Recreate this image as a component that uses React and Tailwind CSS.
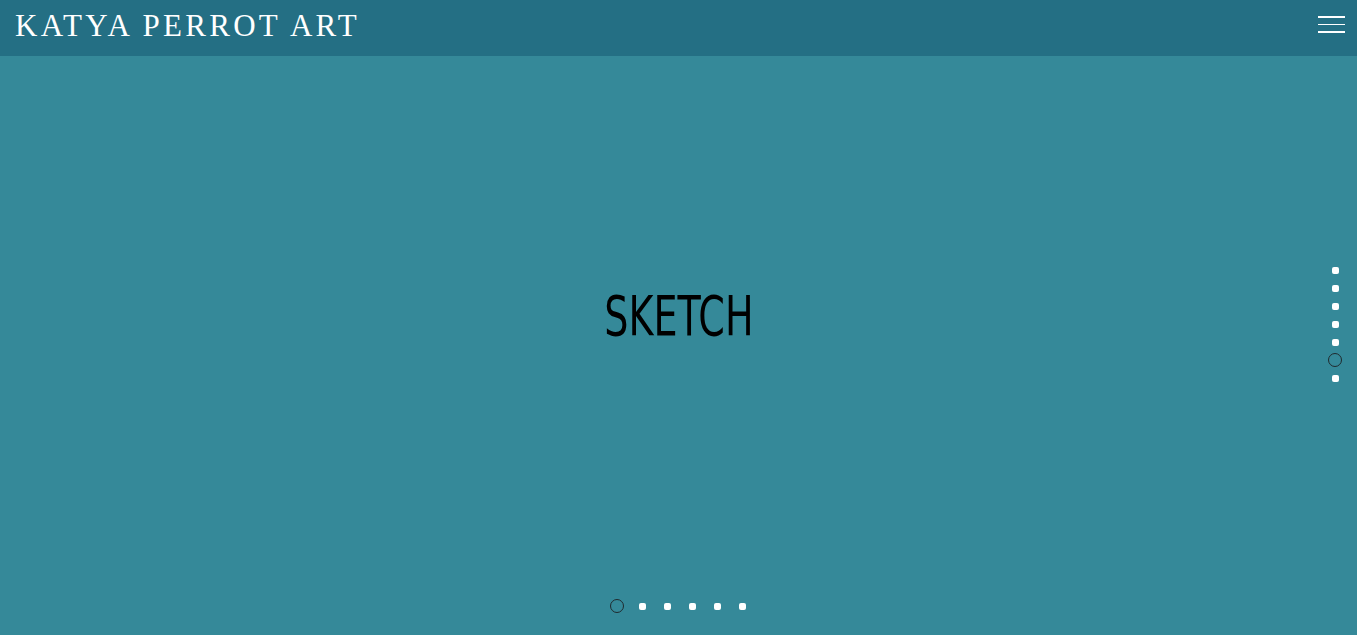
import React from 'react';

const sideDots = [0, 1, 2, 3, 4, 5, 6];
const bottomDots = [0, 1, 2, 3, 4, 5];

function Dot({ active }) {
    if (active) {
        return <span className="block w-[14px] h-[14px] rounded-full border border-[#1f2a2e]" />;
    }
    return <span className="block w-[7px] h-[7px] rounded-[2px] bg-white" />;
}

export default function App() {
    return (
        <div className="w-[1357px] h-[635px] flex flex-col bg-[#358999] overflow-hidden">
            {/* Top bar */}
            <header className="h-[56px] flex-shrink-0 bg-[#246f84] flex items-center justify-between pl-[15px] pr-[12px]">
                <h1
                    className="text-white text-[31px] leading-none tracking-[3.3px] pb-[6px]"
                    style={{ fontFamily: '"Liberation Serif", "DejaVu Serif", serif' }}
                >
                    KATYA PERROT ART
                </h1>
                <button className="flex flex-col gap-[6px] w-[27px] pb-[7px]">
                    <span className="block h-[2px] bg-white" />
                    <span className="block h-[1px] bg-white" />
                    <span className="block h-[2px] bg-white" />
                </button>
            </header>

            {/* Slide */}
            <main className="flex-1 relative flex flex-col">
                <div className="flex-1 flex items-center justify-center pb-[58px]">
                    <h2
                        className="text-black text-[55px] leading-none scale-x-[0.77]"
                        style={{ fontFamily: '"DejaVu Sans Condensed", "Liberation Sans", sans-serif' }}
                    >
                        SKETCH
                    </h2>
                </div>

                {/* Vertical pager */}
                <div className="absolute right-[13px] top-[205px] flex flex-col">
                    {sideDots.map(i => (
                        <div key={i} className="w-[18px] h-[18px] flex items-center justify-center">
                            <Dot active={i === 5} />
                        </div>
                    ))}
                </div>

                {/* Horizontal pager */}
                <div className="absolute inset-x-0 top-[541px] flex justify-center">
                    <div className="flex ml-[2px]">
                        {bottomDots.map(i => (
                            <div key={i} className="w-[25px] h-[18px] flex items-center justify-center">
                                <Dot active={i === 0} />
                            </div>
                        ))}
                    </div>
                </div>
            </main>
        </div>
    );
}
